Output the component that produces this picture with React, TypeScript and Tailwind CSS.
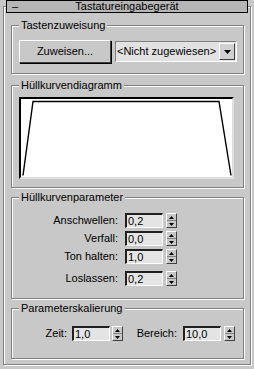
import React from 'react';

const etched = 'border border-[#808080] shadow-[inset_1px_1px_0_#ffffff,1px_1px_0_#ffffff]';
const raised = 'border border-t-white border-l-white border-r-[#404040] border-b-[#404040]';

const Group: React.FC<{ title: string; className?: string; children?: React.ReactNode }> = ({ title, className = '', children }) => (
  <div className={`relative ${etched} ${className}`}>
    <span className="absolute -top-[7px] left-[7px] px-[2px] bg-[#c8c8c8] leading-[13px]">{title}</span>
    {children}
  </div>
);

const Spinner: React.FC<{ className?: string }> = ({ className = '' }) => (
  <div className={`w-[11px] h-[15px] flex flex-col bg-[#c8c8c8] ${raised} ${className}`}>
    <div className="flex-1 flex items-center justify-center border-b border-[#808080]">
      <svg width="5" height="3" viewBox="0 0 5 3"><polygon points="2.5,0 5,3 0,3" fill="#000" /></svg>
    </div>
    <div className="flex-1 flex items-center justify-center">
      <svg width="5" height="3" viewBox="0 0 5 3"><polygon points="0,0 5,0 2.5,3" fill="#000" /></svg>
    </div>
  </div>
);

const Field: React.FC<{ value: string; className?: string }> = ({ value, className = '' }) => (
  <div className={`w-[38px] h-[15px] bg-[#e4e4e4] border-t-2 border-l-2 border-t-[#202020] border-l-[#202020] border-r border-b border-r-white border-b-white pl-[1px] leading-[12px] ${className}`}>
    {value}
  </div>
);

const ParamRow: React.FC<{ label: string; value: string; className?: string }> = ({ label, value, className = '' }) => (
  <div className={`flex items-center ${className}`}>
    <span className="w-[106px] text-right leading-[15px]">{label}</span>
    <Field value={value} className="ml-[7px]" />
    <Spinner className="ml-[3px]" />
  </div>
);

export default function App() {
  return (
    <div className="w-[254px] h-[369px] bg-[#c8c8c8] text-black text-[11px] font-['Liberation_Sans',Arial,sans-serif] overflow-hidden">
      <div className="relative z-10 mx-[6px] h-[13px] border border-black bg-[#b6b6b6] flex items-center leading-[11px]">
        <span className="w-[14px] pl-[5px]">–</span>
        <span className="flex-1 text-center">Tastatureingabegerät</span>
        <span className="w-[14px]" />
      </div>

      <div className={`-mt-[7px] mx-[3px] h-[359px] pt-[18px] pl-[7px] pr-[6px] ${etched}`}>
        <Group title="Tastenzuweisung" className="h-[49px] pt-[14px] pl-[7px]">
          <div className="flex items-start">
            <div className={`w-[92px] h-[23px] flex items-center justify-center bg-[#c8c8c8] ${raised} shadow-[1px_1px_0_#000]`}>
              Zuweisen...
            </div>
            <div className="ml-[4px] mt-[1px] w-[122px] h-[21px] flex items-center bg-[#e2e2e2] border border-t-[#808080] border-l-[#808080] border-r-white border-b-white pl-[1px] pr-[1px]">
              <span className="flex-1 whitespace-nowrap overflow-hidden">&lt;Nicht zugewiesen&gt;</span>
              <div className={`w-[16px] h-[17px] shrink-0 flex items-center justify-center bg-[#d0d0d0] ${raised}`}>
                <svg width="7" height="4" viewBox="0 0 7 4"><polygon points="0,0 7,0 3.5,4" fill="#000" /></svg>
              </div>
            </div>
          </div>
        </Group>

        <Group title="Hüllkurvendiagramm" className="mt-[11px] h-[103px] pt-[11px] pl-[7px]">
          <div className="w-[215px] h-[82px] bg-white border-2 border-t-black border-l-black border-r-[#e0e0e0] border-b-[#e0e0e0]">
            <svg width="211" height="78" viewBox="0 0 211 78">
              <polyline points="2,76.5 12,2.5 198,2.5 210,76.5" fill="none" stroke="#000" strokeWidth="1.4" />
            </svg>
          </div>
        </Group>

        <Group title="Hüllkurvenparameter" className="mt-[9px] h-[102px] pt-[15px]">
          <ParamRow label="Anschwellen:" value="0,2" />
          <ParamRow label="Verfall:" value="0,0" className="mt-[3px]" />
          <ParamRow label="Ton halten:" value="1,0" className="mt-[3px]" />
          <ParamRow label="Loslassen:" value="0,2" className="mt-[7px]" />
        </Group>

        <Group title="Parameterskalierung" className="mt-[9px] h-[51px] pt-[17px]">
          <div className="flex items-center">
            <span className="w-[55px] text-right leading-[15px]">Zeit:</span>
            <Field value="1,0" className="ml-[5px]" />
            <Spinner className="ml-[2px]" />
            <span className="w-[54px] text-right leading-[15px]">Bereich:</span>
            <Field value="10,0" className="ml-[6px]" />
            <Spinner className="ml-[3px]" />
          </div>
        </Group>
      </div>
    </div>
  );
}
